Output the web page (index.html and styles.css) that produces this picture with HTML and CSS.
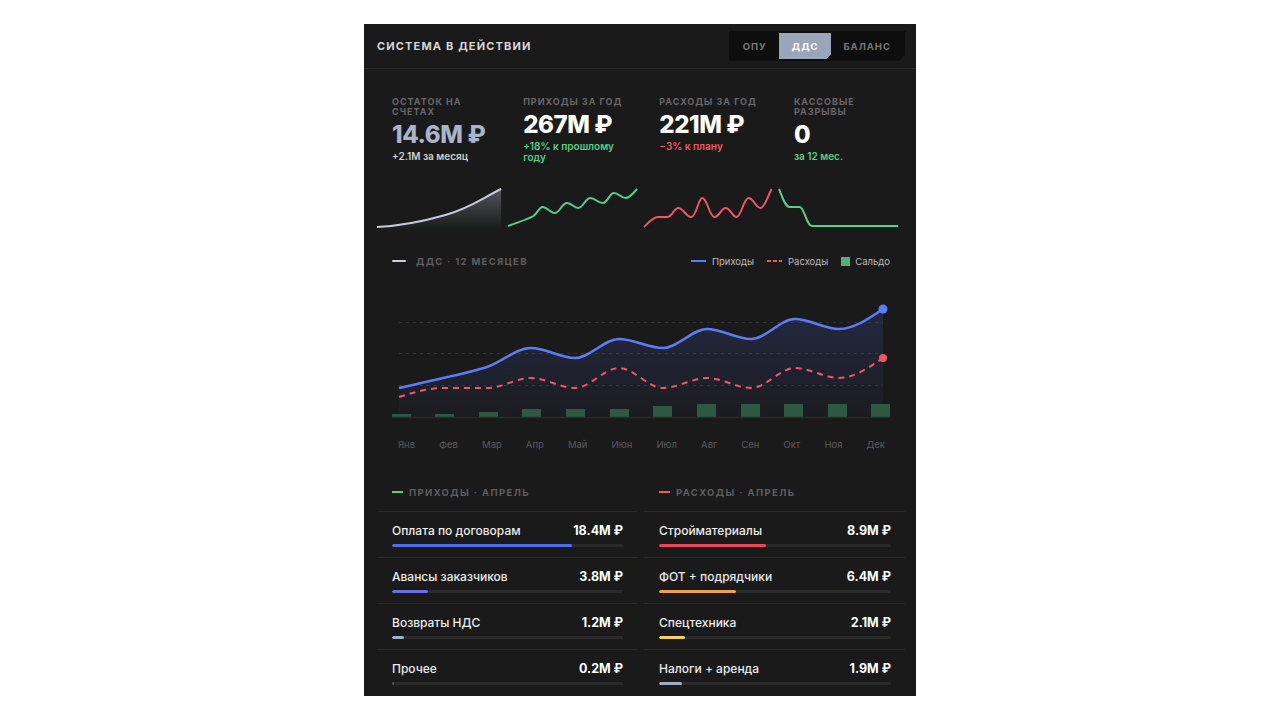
FILE: index.html
```html
<!DOCTYPE html>
<html lang="ru">
<head>
<meta charset="utf-8">
<title>Система в действии</title>
<link rel="stylesheet" href="styles.css">
</head>
<body>
<div class="card">
  <header class="head">
    <h1 class="title">СИСТЕМА В ДЕЙСТВИИ</h1>
    <nav class="tabs">
      <span class="tab">ОПУ</span>
      <span class="tab active">ДДС</span>
      <span class="tab">БАЛАНС</span>
    </nav>
  </header>

  <section class="kpis">
    <div class="kpi">
      <div class="kpi-label">ОСТАТОК НА<br>СЧЕТАХ</div>
      <div class="kpi-value muted">14.6M ₽</div>
      <div class="kpi-sub">+2.1M за месяц</div>
      <svg class="spark" viewBox="0 0 127 48" preserveAspectRatio="none">
        <defs>
          <linearGradient id="sg1" x1="0" y1="0" x2="0" y2="1">
            <stop offset="0" stop-color="#c8d0e2" stop-opacity="0.32"/>
            <stop offset="1" stop-color="#c8d0e2" stop-opacity="0"/>
          </linearGradient>
        </defs>
        <path d="M0,43 C22,42 45,38 70,31 S108,14 127,5 L127,46 L0,46 Z" fill="url(#sg1)"/>
        <path d="M0,43 C22,42 45,38 70,31 S108,14 127,5" fill="none" stroke="#c3cbdd" stroke-width="2" vector-effect="non-scaling-stroke"/>
      </svg>
    </div>
    <div class="kpi">
      <div class="kpi-label">ПРИХОДЫ ЗА ГОД</div>
      <div class="kpi-value">267M ₽</div>
      <div class="kpi-sub up">+18% к прошлому<br>году</div>
      <svg class="spark" viewBox="0 0 127 48" preserveAspectRatio="none">
        <path d="M0,42 C10,38 18,36 25,32 C29,29 31,23 34,23 C38,23 42,29 46,29 C51,29 53,19 58,19 C63,19 65,24 69,24 C74,24 76,14 81,14 C86,14 88,19 93,19 C98,19 100,9 104,9 C109,9 111,14 116,14 C120,14 124,8 127,5" fill="none" stroke="#55cf8a" stroke-width="2" vector-effect="non-scaling-stroke"/>
      </svg>
    </div>
    <div class="kpi">
      <div class="kpi-label">РАСХОДЫ ЗА ГОД</div>
      <div class="kpi-value">221M ₽</div>
      <div class="kpi-sub down">−3% к плану</div>
      <svg class="spark" viewBox="0 0 127 48" preserveAspectRatio="none">
        <path d="M0,43 C5,38 9,33 14,33 L23,33 C28,33 30,24 34,24 C39,24 42,33 47,33 C52,33 54,14 58,14 C63,14 65,33 70,33 C75,33 77,24 81,24 C86,24 88,33 92,33 C97,33 99,14 104,14 C109,14 111,24 116,24 C120,24 124,10 127,5" fill="none" stroke="#f0566a" stroke-width="2" vector-effect="non-scaling-stroke"/>
      </svg>
    </div>
    <div class="kpi">
      <div class="kpi-label">КАССОВЫЕ<br>РАЗРЫВЫ</div>
      <div class="kpi-value">0</div>
      <div class="kpi-sub up">за 12 мес.</div>
      <svg class="spark" viewBox="0 0 127 48" preserveAspectRatio="none">
        <path d="M0,5 C4,14 6,23 11,23 L21,23 C26,23 28,42 34,42 L122,42" fill="none" stroke="#55cf8a" stroke-width="2" vector-effect="non-scaling-stroke"/>
      </svg>
    </div>
  </section>

  <section class="flow">
    <div class="flow-head">
      <div class="flow-title"><i class="swatch-line"></i>ДДС · 12 МЕСЯЦЕВ</div>
      <div class="legend">
        <span class="legend-item"><i class="lg-line"></i>Приходы</span>
        <span class="legend-item"><i class="lg-dash"></i>Расходы</span>
        <span class="legend-item"><i class="lg-sq"></i>Сальдо</span>
      </div>
    </div>
    <svg class="chart" viewBox="0 0 498 130">
      <defs>
        <linearGradient id="area" x1="0" y1="0" x2="0" y2="1">
          <stop offset="0" stop-color="#4a63d8" stop-opacity="0.2"/>
          <stop offset="1" stop-color="#4a63d8" stop-opacity="0.03"/>
        </linearGradient>
      </defs>
      <g stroke="#343434" stroke-width="1" stroke-dasharray="3 4">
        <line x1="7" x2="491" y1="32.5" y2="32.5"/>
        <line x1="7" x2="491" y1="63.5" y2="63.5"/>
        <line x1="7" x2="491" y1="95.5" y2="95.5"/>
      </g>
      <path d="M7,98 C21.67,94.75 36.33,91.5 51,88 C65.67,84.5 80.33,82 95,77 C109.67,72 124.33,58 139,58 C153.67,58 168.33,68 183,68 C197.67,68 212.33,49 227,49 C241.67,49 256.33,58 271,58 C285.67,58 300.33,39 315,39 C329.67,39 344.33,49 359,49 C373.67,49 388.33,29 403,29 C417.67,29 432.33,39 447,39 C461.67,39 476.33,29 491,19 L491,127 L7,127 Z" fill="url(#area)"/>
      <g fill="#2d5943">
        <rect x="0" y="124" width="19" height="3"/>
        <rect x="43" y="124" width="19" height="3"/>
        <rect x="87" y="122" width="19" height="5"/>
        <rect x="130" y="119" width="19" height="8"/>
        <rect x="174" y="119" width="19" height="8"/>
        <rect x="218" y="119" width="19" height="8"/>
        <rect x="261" y="116" width="19" height="11"/>
        <rect x="305" y="114" width="19" height="13"/>
        <rect x="349" y="114" width="19" height="13"/>
        <rect x="392" y="114" width="19" height="13"/>
        <rect x="436" y="114" width="19" height="13"/>
        <rect x="479" y="114" width="19" height="13"/>
      </g>
      <line x1="0" x2="498" y1="127.5" y2="127.5" stroke="#292929" stroke-width="1.5"/>
      <path d="M7,107 C21.67,102.5 36.33,98 51,98 C65.67,98 80.33,98 95,98 C109.67,98 124.33,88 139,88 C153.67,88 168.33,98 183,98 C197.67,98 212.33,78 227,78 C241.67,78 256.33,98 271,98 C285.67,98 300.33,88 315,88 C329.67,88 344.33,98 359,98 C373.67,98 388.33,78 403,78 C417.67,78 432.33,88 447,88 C461.67,88 476.33,78 491,68" fill="none" stroke="#f0566a" stroke-width="2" stroke-dasharray="6 5"/>
      <path d="M7,98 C21.67,94.75 36.33,91.5 51,88 C65.67,84.5 80.33,82 95,77 C109.67,72 124.33,58 139,58 C153.67,58 168.33,68 183,68 C197.67,68 212.33,49 227,49 C241.67,49 256.33,58 271,58 C285.67,58 300.33,39 315,39 C329.67,39 344.33,49 359,49 C373.67,49 388.33,29 403,29 C417.67,29 432.33,39 447,39 C461.67,39 476.33,29 491,19" fill="none" stroke="#5b7cf5" stroke-width="2.5"/>
      <circle cx="491" cy="19" r="4.5" fill="#5b7cf5"/>
      <circle cx="491" cy="68" r="4" fill="#f0566a"/>
    </svg>
    <div class="months">
      <span>Янв</span><span>Фев</span><span>Мар</span><span>Апр</span><span>Май</span><span>Июн</span>
      <span>Июл</span><span>Авг</span><span>Сен</span><span>Окт</span><span>Ноя</span><span>Дек</span>
    </div>
  </section>

  <section class="breakdown">
    <div class="bcol">
      <div class="bhead"><i class="dash green"></i>ПРИХОДЫ · АПРЕЛЬ</div>
      <div class="brow">
        <div class="brow-top"><span class="brow-name">Оплата по договорам</span><span class="brow-val">18.4M ₽</span></div>
        <div class="track"><div class="fill c-blue" style="width:78%"></div></div>
      </div>
      <div class="brow">
        <div class="brow-top"><span class="brow-name">Авансы заказчиков</span><span class="brow-val">3.8M ₽</span></div>
        <div class="track"><div class="fill c-indigo" style="width:15.6%"></div></div>
      </div>
      <div class="brow">
        <div class="brow-top"><span class="brow-name">Возвраты НДС</span><span class="brow-val">1.2M ₽</span></div>
        <div class="track"><div class="fill c-steel" style="width:5%"></div></div>
      </div>
      <div class="brow">
        <div class="brow-top"><span class="brow-name">Прочее</span><span class="brow-val">0.2M ₽</span></div>
        <div class="track"><div class="fill c-gray" style="width:1%"></div></div>
      </div>
    </div>
    <div class="bcol">
      <div class="bhead"><i class="dash red"></i>РАСХОДЫ · АПРЕЛЬ</div>
      <div class="brow">
        <div class="brow-top"><span class="brow-name">Стройматериалы</span><span class="brow-val">8.9M ₽</span></div>
        <div class="track"><div class="fill c-red" style="width:46%"></div></div>
      </div>
      <div class="brow">
        <div class="brow-top"><span class="brow-name">ФОТ + подрядчики</span><span class="brow-val">6.4M ₽</span></div>
        <div class="track"><div class="fill c-orange" style="width:33%"></div></div>
      </div>
      <div class="brow">
        <div class="brow-top"><span class="brow-name">Спецтехника</span><span class="brow-val">2.1M ₽</span></div>
        <div class="track"><div class="fill c-yellow" style="width:11%"></div></div>
      </div>
      <div class="brow">
        <div class="brow-top"><span class="brow-name">Налоги + аренда</span><span class="brow-val">1.9M ₽</span></div>
        <div class="track"><div class="fill c-steel" style="width:10%"></div></div>
      </div>
    </div>
  </section>
</div>
</body>
</html>
```

FILE: styles.css
```css
* { box-sizing: border-box; margin: 0; padding: 0; }

body {
  background: #ffffff;
  font-family: Inter, "Noto Sans", "Liberation Sans", sans-serif;
  padding-top: 24px;
}

.card {
  width: 552px;
  height: 672px;
  margin: 0 auto;
  background: #1a1a1a;
  overflow: hidden;
  color: #eeeeee;
}

/* header */
.head {
  height: 45px;
  display: flex;
  align-items: center;
  justify-content: space-between;
  padding: 0 11px 0 13px;
  border-bottom: 1px solid #2a2a2a;
}
.title {
  font-size: 11px;
  font-weight: 700;
  letter-spacing: 1.15px;
  color: #d6d6d6;
}
.tabs {
  display: flex;
  height: 30px;
  padding: 2px;
  background: #0e0e0e;
  clip-path: polygon(0 0, 100% 0, 100% calc(100% - 6px), calc(100% - 6px) 100%, 0 100%);
}
.tab {
  display: flex;
  align-items: center;
  padding: 0 12px;
  font-size: 9.5px;
  font-weight: 700;
  letter-spacing: 1px;
  color: #777777;
}
.tab.active {
  padding: 0 13px;
  background: #9aa5b9;
  color: #ffffff;
  clip-path: polygon(0 0, 100% 0, 100% calc(100% - 5px), calc(100% - 5px) 100%, 0 100%);
}

/* KPIs */
.kpis {
  display: grid;
  grid-template-columns: repeat(4, 1fr);
  column-gap: 7px;
  padding: 28px 13px 0;
}
.kpi {
  height: 135px;
  display: flex;
  flex-direction: column;
}
.kpi-label {
  padding: 0 15px;
  font-size: 9px;
  font-weight: 700;
  letter-spacing: 1px;
  line-height: 10px;
  color: #686868;
  white-space: nowrap;
}
.kpi-value {
  padding: 0 15px;
  margin-top: 4px;
  font-size: 24px;
  font-weight: 800;
  line-height: 28px;
  letter-spacing: -0.4px;
  color: #ffffff;
  white-space: nowrap;
}
.kpi-value.muted { color: #a9b4c9; }
.kpi-sub {
  padding: 0 15px;
  margin-top: 2px;
  font-size: 10px;
  font-weight: 600;
  line-height: 11px;
  color: #d0d0d0;
  white-space: nowrap;
}
.up { color: #55cf8a; }
.down { color: #f05a6a; }
.spark {
  display: block;
  margin-top: auto;
  width: 100%;
  height: 48px;
  overflow: visible;
}

/* flow chart */
.flow { padding: 22px 26px 0 28px; }
.flow-head {
  display: flex;
  align-items: center;
  justify-content: space-between;
  height: 14px;
}
.flow-title {
  display: flex;
  align-items: center;
  gap: 10px;
  font-size: 9.5px;
  font-weight: 700;
  letter-spacing: 1.3px;
  color: #5e5e5e;
}
.swatch-line {
  display: block;
  width: 14px;
  height: 2px;
  border-radius: 1px;
  background: #c8d0e2;
}
.legend {
  display: flex;
  gap: 13px;
  font-size: 9.5px;
  color: #bdbdbd;
}
.legend-item {
  display: flex;
  align-items: center;
  gap: 6px;
}
.lg-line {
  display: block;
  width: 15px;
  height: 2px;
  background: #5b7cf5;
}
.lg-dash {
  display: block;
  width: 15px;
  height: 2px;
  background: repeating-linear-gradient(90deg, #f0566a 0 4px, transparent 4px 6px);
}
.lg-sq {
  display: block;
  width: 9px;
  height: 9px;
  margin-right: -1px;
  background: #4fb07a;
}
.chart {
  display: block;
  margin-top: 22px;
  width: 498px;
  height: 130px;
  overflow: visible;
}
.months {
  margin-top: 19px;
  display: flex;
  justify-content: space-between;
  padding: 0 5px 0 6px;
  font-size: 9.5px;
  line-height: 12px;
  color: #5a5a5a;
}

/* breakdown */
.breakdown {
  display: grid;
  grid-template-columns: 260px 261px;
  column-gap: 7px;
  padding: 34px 11px 0 13px;
}
.bhead {
  display: flex;
  align-items: center;
  gap: 6px;
  height: 14px;
  padding-left: 15px;
  margin-bottom: 12px;
  font-size: 9.5px;
  font-weight: 700;
  letter-spacing: 1.4px;
  color: #5e5e5e;
}
.dash {
  display: block;
  width: 11px;
  height: 2px;
}
.dash.green { background: #55cf8a; }
.dash.red { background: #f0566a; }
.brow {
  border-top: 1px solid #2a2a2a;
  padding: 12px 14px 10px 15px;
}
.brow-top {
  display: flex;
  justify-content: space-between;
  font-size: 12px;
  line-height: 14px;
}
.brow-name { font-weight: 500; color: #ececec; }
.brow-val { font-weight: 700; color: #ffffff; font-size: 12.5px; }
.track {
  margin-top: 6px;
  height: 3px;
  border-radius: 2px;
  background: #2a2a2a;
  overflow: hidden;
}
.fill { height: 100%; border-radius: 2px; }
.c-blue { background: #4f6ee8; }
.c-indigo { background: #6b6fe3; }
.c-steel { background: #9fadc6; }
.c-gray { background: #555555; }
.c-red { background: #e8485a; }
.c-orange { background: #f0a050; }
.c-yellow { background: #f5d35a; }
```
